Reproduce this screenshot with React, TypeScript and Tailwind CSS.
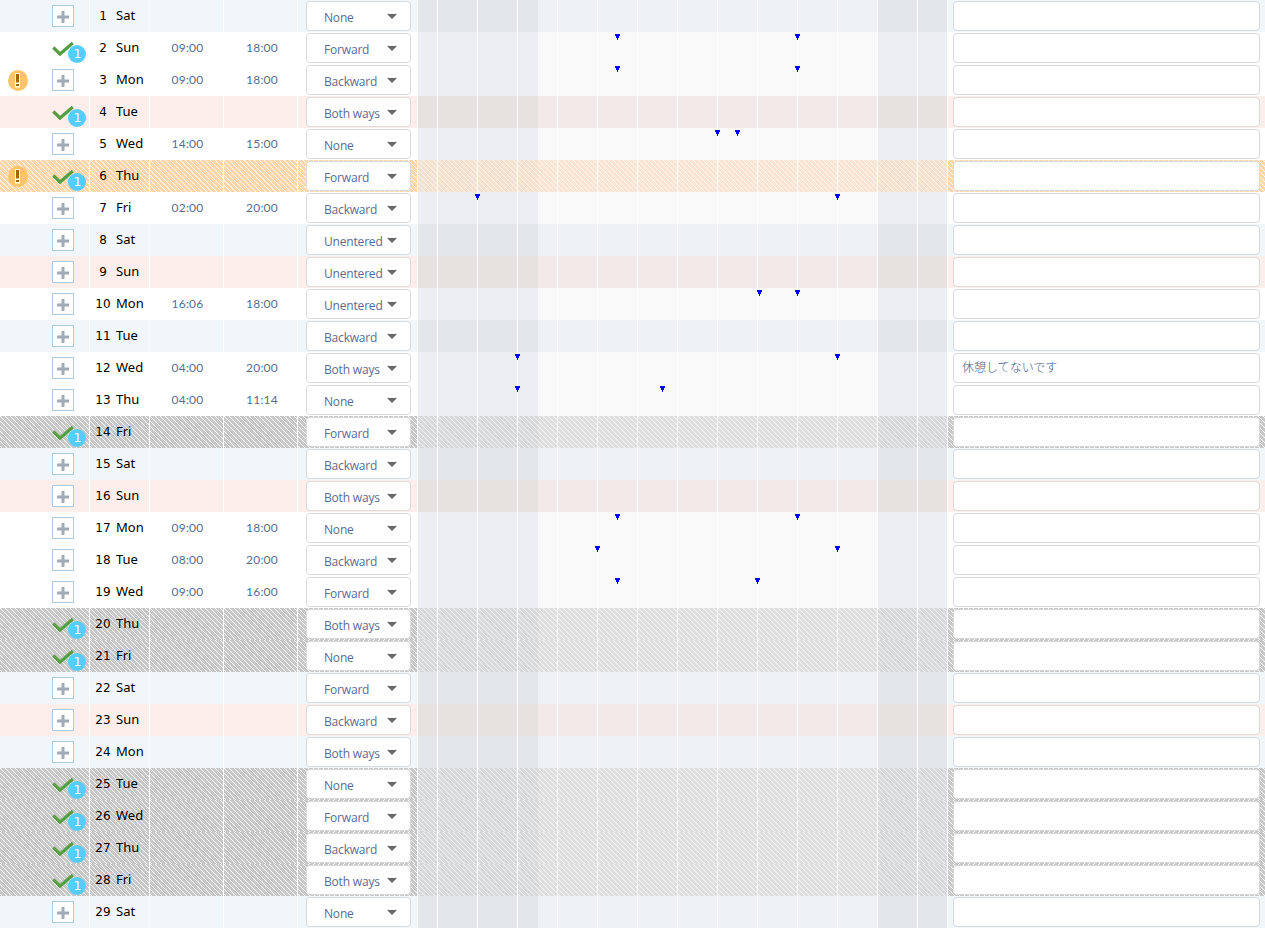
type Kind = "work" | "off" | "holiday" | "leave" | "closed";
type Day = { weekday: string; kind: Kind; direct: string; start?: string; end?: string; request?: boolean; alert?: boolean; note?: string };

const days: Day[] = [
  { weekday: "Sat", kind: "off", direct: "None" },
  { weekday: "Sun", kind: "work", direct: "Forward", start: "09:00", end: "18:00", request: true },
  { weekday: "Mon", kind: "work", direct: "Backward", start: "09:00", end: "18:00", alert: true },
  { weekday: "Tue", kind: "holiday", direct: "Both ways", request: true },
  { weekday: "Wed", kind: "work", direct: "None", start: "14:00", end: "15:00" },
  { weekday: "Thu", kind: "leave", direct: "Forward", request: true, alert: true },
  { weekday: "Fri", kind: "work", direct: "Backward", start: "02:00", end: "20:00" },
  { weekday: "Sat", kind: "off", direct: "Unentered" },
  { weekday: "Sun", kind: "holiday", direct: "Unentered" },
  { weekday: "Mon", kind: "work", direct: "Unentered", start: "16:06", end: "18:00" },
  { weekday: "Tue", kind: "off", direct: "Backward" },
  { weekday: "Wed", kind: "work", direct: "Both ways", start: "04:00", end: "20:00", note: "休憩してないです" },
  { weekday: "Thu", kind: "work", direct: "None", start: "04:00", end: "11:14" },
  { weekday: "Fri", kind: "closed", direct: "Forward", request: true },
  { weekday: "Sat", kind: "off", direct: "Backward" },
  { weekday: "Sun", kind: "holiday", direct: "Both ways" },
  { weekday: "Mon", kind: "work", direct: "None", start: "09:00", end: "18:00" },
  { weekday: "Tue", kind: "work", direct: "Backward", start: "08:00", end: "20:00" },
  { weekday: "Wed", kind: "work", direct: "Forward", start: "09:00", end: "16:00" },
  { weekday: "Thu", kind: "closed", direct: "Both ways", request: true },
  { weekday: "Fri", kind: "closed", direct: "None", request: true },
  { weekday: "Sat", kind: "off", direct: "Forward" },
  { weekday: "Sun", kind: "holiday", direct: "Backward" },
  { weekday: "Mon", kind: "off", direct: "Both ways" },
  { weekday: "Tue", kind: "closed", direct: "None", request: true },
  { weekday: "Wed", kind: "closed", direct: "Forward", request: true },
  { weekday: "Thu", kind: "closed", direct: "Backward", request: true },
  { weekday: "Fri", kind: "closed", direct: "Both ways", request: true },
  { weekday: "Sat", kind: "off", direct: "None" },
];

const cellBg: Record<Kind, string> = {
  work: "bg-white",
  off: "bg-[#f1f6fb]",
  holiday: "bg-[#fdeeeb]",
  leave: "bg-[linear-gradient(45deg,#ffd5aa_45%,#fff_45%,#fff_55%,#ffd5aa_55%)] bg-size-[5px_5px]",
  closed: "bg-[linear-gradient(45deg,#c8c8c8_45%,#fff_45%,#fff_55%,#c8c8c8_55%)] bg-size-[5px_5px]",
};

const nightBg: Record<Kind, string> = {
  work: "bg-[#edeef3]",
  off: "bg-[#e3e7eb]",
  holiday: "bg-[#e7e2df]",
  leave: "bg-[linear-gradient(45deg,#f6e1cd_45%,#fbf5ee_45%,#fbf5ee_55%,#f6e1cd_55%)] bg-size-[5px_5px]",
  closed: "bg-[linear-gradient(45deg,#d8d9db_45%,#f3f3f5_45%,#f3f3f5_55%,#d8d9db_55%)] bg-size-[5px_5px]",
};

const dayBg: Record<Kind, string> = {
  work: "bg-[#f9f9f9]",
  off: "bg-[#eef2f7]",
  holiday: "bg-[#f3e9e8]",
  leave: "bg-[linear-gradient(45deg,#fbe5d2_45%,#fdf7f1_45%,#fdf7f1_55%,#fbe5d2_55%)] bg-size-[5px_5px]",
  closed: "bg-[linear-gradient(45deg,#dfdfdf_45%,#f6f6f6_45%,#f6f6f6_55%,#dfdfdf_55%)] bg-size-[5px_5px]",
};

function AlertIcon() {
  return (
    <svg width="20" height="22" viewBox="0 0 20 22" className="mt-1.5">
      <ellipse cx="10" cy="10.5" rx="10" ry="10.5" fill="#ffc466" />
      <path d="M7 3h5v14.5H7z" fill="#fff" />
      <path d="M8 4h3v8.5H8zM8 14h3v2H8z" fill="#a86400" />
    </svg>
  );
}

function RequestIcon() {
  return (
    <div className="relative h-8 w-[34px]">
      <svg width="22" height="16" viewBox="0 0 22 16" className="mt-[9px]">
        <path d="M1.3 6.5 L8 13 L20.8 2" fill="none" stroke="#589e41" strokeWidth="3.2" />
      </svg>
      <span className="absolute top-[13px] left-4 flex size-[18px] items-center justify-center rounded-full bg-[#57ccff] pl-px font-['DejaVu_Sans',sans-serif] text-[12px] leading-none font-normal text-white">
        1
      </span>
    </div>
  );
}

function AddButton() {
  return (
    <button className="mt-[5px] flex size-[22px] items-center justify-center border border-[#b0cbdf] bg-white">
      <svg width="12" height="12" viewBox="0 0 12 12" className="translate-y-px">
        <path d="M4.5 0h3v4.5H12v3H7.5V12h-3V7.5H0v-3h4.5z" fill="#a0abb8" />
      </svg>
    </button>
  );
}

function Marker({ time }: { time: string }) {
  const [h, m] = time.split(":").map(Number);
  return (
    <svg width="5" height="6" viewBox="0 0 5 6" shapeRendering="crispEdges" className="absolute top-0.5" style={{ left: Math.round(17 + (h + m / 60) * 20) }}>
      <path d="M0 0h5v2H4v2H3v2H2V4H1V2H0z" fill="#00f" />
    </svg>
  );
}

function Chart({ day }: { day: Day }) {
  const k = day.kind;
  return (
    <div className="relative flex w-[530px] shrink-0 border-r border-white">
      <div className={"w-[120px] " + nightBg[k]} />
      <div className={"w-[340px] " + dayBg[k]} />
      <div className={"w-[69px] " + nightBg[k]} />
      <div className="absolute inset-0 flex pl-[19px]">
        {Array.from({ length: 13 }, (_, i) => (
          <div key={i} className="w-10 shrink-0 border-l border-white last:w-px" />
        ))}
      </div>
      {day.start && <Marker time={day.start} />}
      {day.end && <Marker time={day.end} />}
    </div>
  );
}

function Row({ day, date }: { day: Day; date: number }) {
  const bg = cellBg[day.kind];
  return (
    <div className="flex h-8">
      <div className={"flex w-[90px] shrink-0 border-r border-white pl-2 " + bg}>
        <div className="w-11 shrink-0">{day.alert && <AlertIcon />}</div>
        {day.request ? <RequestIcon /> : <AddButton />}
      </div>
      <div className={"flex w-[60px] shrink-0 border-r border-white text-black " + bg}>
        <span className="w-[26px] pt-px text-center font-['DejaVu_Sans',sans-serif] text-[12px] leading-[31px]">{date}</span>
        <span className="font-['Noto_Sans',sans-serif] text-[13px] leading-[31px]">{day.weekday}</span>
      </div>
      {[day.start, day.end].map((t, i) => (
        <div key={i} className={"w-[74px] shrink-0 border-r border-white text-center font-['Lato',sans-serif] text-[12px] leading-[31px] tracking-[0.2px] text-[#586d94] " + (i === 0 ? "pl-[2px] " : "pl-[3px] ") + bg}>
          {t}
        </div>
      ))}
      <div className={"w-[120px] shrink-0 border-r border-white pt-px pl-2 " + bg}>
        <button className="flex h-[30px] w-[105px] items-center rounded border border-[#d8dadb] bg-white pl-[17px]">
          <span className="w-[63px] pt-[3px] text-left font-['Open_Sans',sans-serif] text-[12px] leading-none tracking-[-0.18px] text-[#586d94]">{day.direct}</span>
          <svg width="10" height="5" viewBox="0 0 10 5">
            <path d="M0 0h10L5 5z" fill="#666" />
          </svg>
        </button>
      </div>
      <Chart day={day} />
      <div className={"flex-1 pt-px pr-[5px] pl-[5px] " + bg}>
        <div className="flex h-[30px] items-center rounded border border-[#d8dadb] bg-white pb-0.5 pl-2 font-['Noto_Sans_CJK_JP',sans-serif] text-[12px] font-light text-[#425a88]">
          {day.note}
        </div>
      </div>
    </div>
  );
}

export default function App() {
  return (
    <main className="h-[928px] w-[1265px] overflow-hidden bg-white">
      {days.map((day, i) => (
        <Row key={i} day={day} date={i + 1} />
      ))}
    </main>
  );
}
